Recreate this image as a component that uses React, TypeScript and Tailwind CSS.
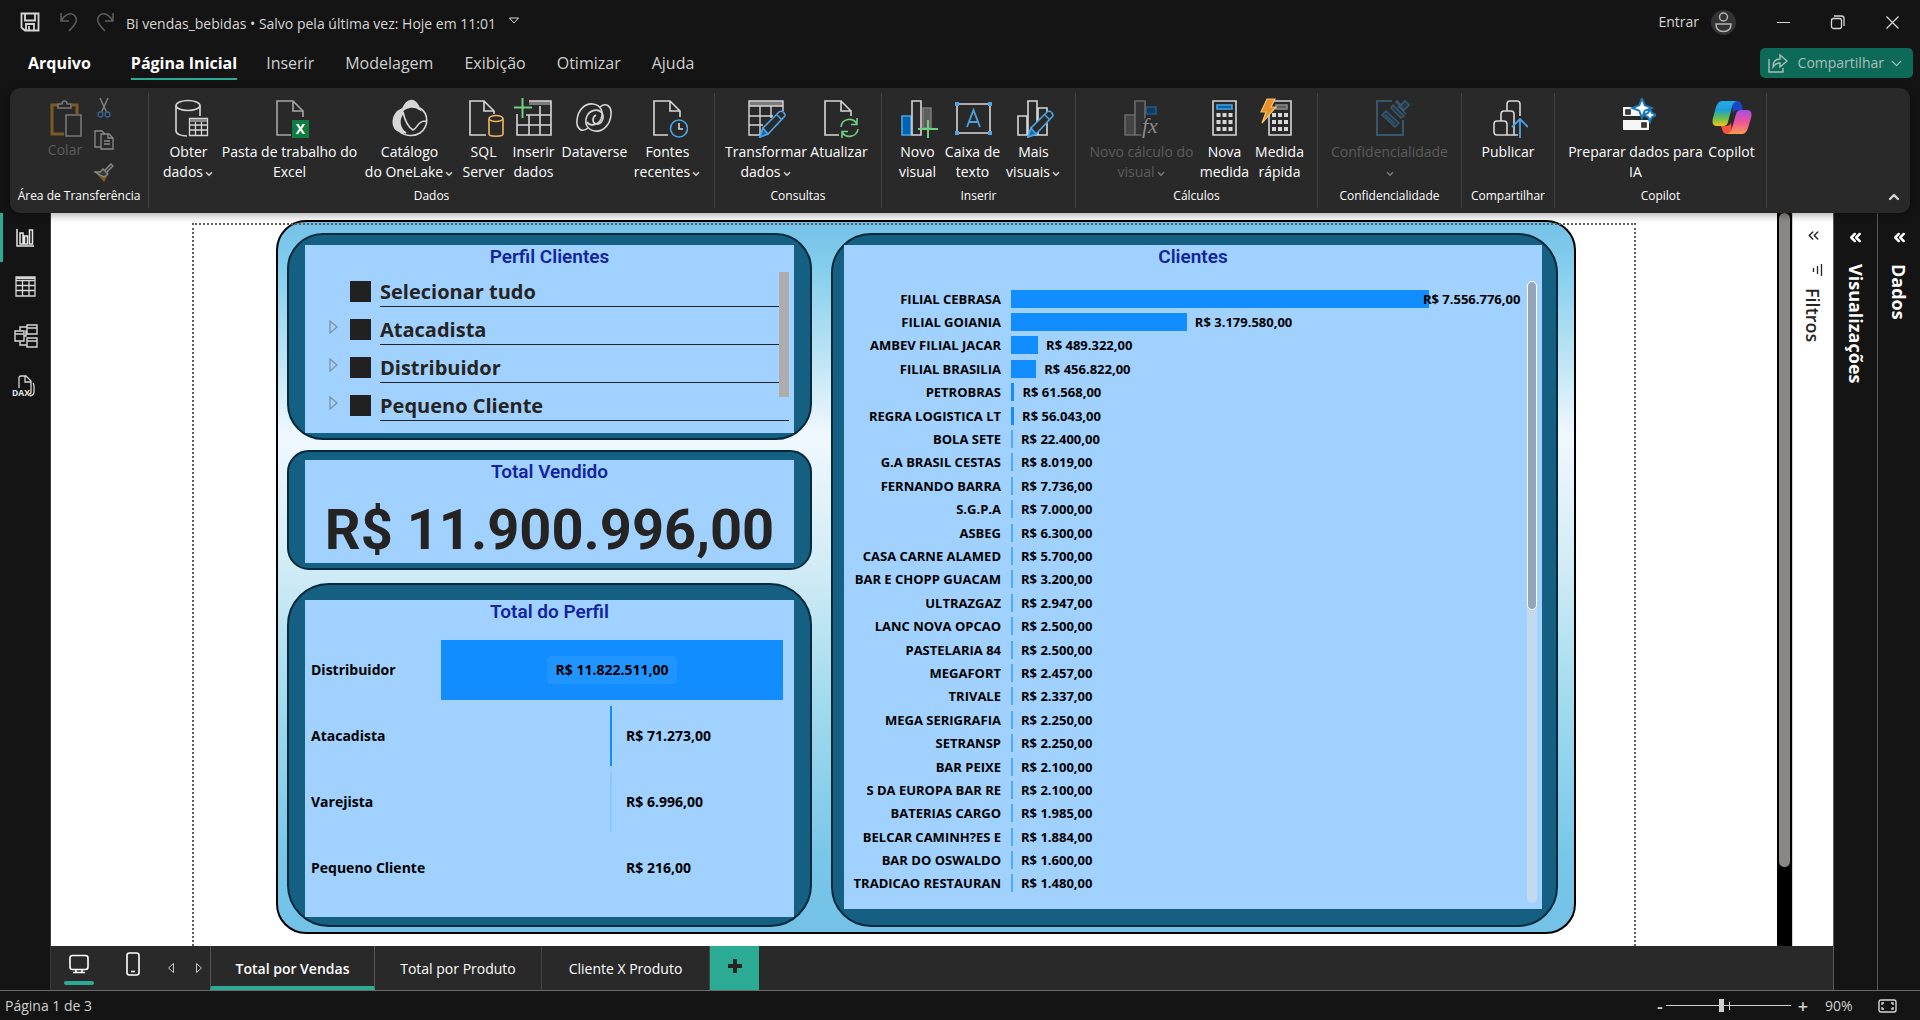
import React from "react";
import { ChevronDown, ChevronUp, ChevronsLeft } from "lucide-react";

const LIGHT = "#d6d6d6";
const BLUE = "#4ba3e3";

function Icon({ children }: { children: React.ReactNode }) {
  return (
    <svg className="block size-10 shrink-0" viewBox="0 0 40 40" fill="none" stroke={LIGHT} strokeWidth="1.6" aria-hidden="true">
      {children}
    </svg>
  );
}

const PageShape = ({ x = 7 }: { x?: number }) => (
  <g transform={`translate(${x} 0)`}>
    <path d="M14 37H0V3h16l10 10v6" />
    <path d="M16 3v10h10" />
  </g>
);

const Pencil = () => (
  <g stroke={BLUE}>
    <path d="M14 39l3-9L33 14q3-2 5 1t0 4L22 36z" fill="#292929" />
    <path d="M14 39l3-9 5 6z" fill="#0f6cbd" />
    <path d="M31 17l5 5" />
  </g>
);

const DatabaseTableIcon = () => (
  <Icon>
    <ellipse cx="19" cy="7.5" rx="12" ry="5" />
    <path d="M7 8v25c0 3 5 5 11 5M31 8v10" />
    <path d="M20.500 20.500h18v17h-18zM20.500 27h18M20.500 32h18M26.500 24v14M32.500 24v14" strokeWidth="1.300" />
    <path d="M21 21h17v3H21z" fill="#8a8a8a" stroke="none" />
  </Icon>
);

const ExcelIcon = () => (
  <Icon>
    <g stroke="#a6a6a6"><PageShape /></g>
    <path d="M22 22h17v18H22z" fill="#107c41" stroke="none" />
    <text x="30.500" y="36" textAnchor="middle" fill="#fff" stroke="none" fontSize="14" fontWeight="700" fontFamily="Open Sans, sans-serif">X</text>
  </Icon>
);

const OneLakeIcon = () => (
  <Icon>
    <path d="M12 11C1 16 0 31 11 34l5 1C9 30 8 22 13 15z" fill={LIGHT} />
    <path d="M12 13c2-7 6-11 10-10.500 4 .5 6 4 8 9-6-4-13-3-18 1.500z" fill={LIGHT} />
    <path d="M30 10c9 6 9 18 0 25-6 4-15 3-20-1M13 14c2 9 5 15 10 18 5-2 4-9 13-9" />
  </Icon>
);

const SqlIcon = () => (
  <Icon>
    <path d="M22 37H6V3h14l10 10v3M20 3v10h10" />
    <g stroke="#f2b661">
      <path d="M25 21v15c0 3 14 3 14 0V21" fill="#292929" />
      <ellipse cx="32" cy="20.500" rx="7" ry="3" fill="#292929" />
    </g>
  </Icon>
);

const InsertTableIcon = () => (
  <Icon>
    <path d="M15 3h22v4H15z" fill="#7a7a7a" stroke="none" />
    <path d="M3 16v21h34V3H15M12 17h25M3 27h34M15 17v20M26 8v29" />
    <path d="M8.500 0v20M0 9.500h18" stroke="#6fce7f" strokeWidth="2" />
  </Icon>
);

const DataverseIcon = () => (
  <Icon>
    <path d="M25 9C31 4 37 8 36 17c-1 10-8 17-16 16-8-1-11-8-8-15 3-6 11-8 15-3 3 5-1 12-6 11-4-1-4-7 0-9" />
    <path d="M13 30C7 35 1 31 2 22 3 12 10 5 18 6c8 1 11 8 8 15-3 6-11 8-14 3" />
  </Icon>
);

const RecentIcon = () => (
  <Icon>
    <path d="M20 37H6V3h16l10 10v6M22 3v10h10" />
    <circle cx="31" cy="30.500" r="8.500" stroke={BLUE} />
    <path d="M31 25v6h4" />
  </Icon>
);

const TransformIcon = () => (
  <Icon>
    <path d="M3 3h34v5H3z" fill="#7a7a7a" stroke="none" />
    <path d="M16 37H3V3h34v10M3 8h34M3 18h24M3 27h14M14 8v29M25 8v12" strokeWidth="1.400" />
    <Pencil />
  </Icon>
);

const RefreshIcon = () => (
  <Icon>
    <path d="M20 37H6V3h16l10 10v5M22 3v10h10" />
    <g stroke="#6fce7f">
      <path d="M22 29c1-9 12-10 16-3M38 20v6.500h-6M39 31c-1 8-12 10-16 3M23 40v-6.500h6" />
    </g>
  </Icon>
);

const NewVisualIcon = () => (
  <Icon>
    <path d="M4 18h9v19H4z" fill="#0063b1" stroke={BLUE} />
    <path d="M25 10h8v20h-8z" fill="#605e5c" stroke="#797775" />
    <path d="M14 3h9v34h-9z" fill="#292929" />
    <path d="M30 22v18M20 31h20" stroke="#6fce7f" strokeWidth="2" />
  </Icon>
);

const TextBoxIcon = () => (
  <Icon>
    <path d="M4 6h33v29H4z" />
    <path d="M2 4h4v4H2zM35 4h4v4h-4zM2 33h4v4H2zM35 33h4v4h-4z" fill={BLUE} stroke="none" />
    <path d="M14 29l6.500-17L27 29M16 24h9" stroke={BLUE} strokeWidth="1.800" />
  </Icon>
);

const MoreVisualsIcon = () => (
  <Icon>
    <path d="M4 18h9v19H4zM14 3h9v34h-9zM24 10h9v27h-9z" />
    <Pencil />
  </Icon>
);

const VisualCalcIcon = () => (
  <Icon>
    <g stroke="#6a6a6a">
      <path d="M3 17h10v20H3z" fill="#444" />
      <path d="M24 9h10v7H24z" fill="#0d3f66" stroke="#295a80" />
      <path d="M13 3h10v34H13z" fill="#333" />
    </g>
    <text x="20" y="35" fill="#8a8a8a" stroke="#292929" strokeWidth="3" paintOrder="stroke" fontSize="22" fontStyle="italic" fontFamily="Liberation Serif, serif">fx</text>
  </Icon>
);

const CalcKeys = ({ x }: { x: number }) => (
  <g fill={LIGHT} stroke="none" transform={`translate(${x} 0)`}>
    {[15, 22, 29].map((y) => <path key={y} d={`M0 ${y}h4v4h-4zM6 ${y}h4v4h-4zM12 ${y}h4v4h-4z`} />)}
  </g>
);

const MeasureIcon = () => (
  <Icon>
    <path d="M8 3h23v34H8z" />
    <path d="M12 7h15v4H12z" fill="#0063b1" stroke={BLUE} />
    <CalcKeys x={11.500} />
  </Icon>
);

const QuickMeasureIcon = () => (
  <Icon>
    <path d="M9 3h22v34H9z" />
    <path d="M16 7h11v4H16z" fill="#605e5c" stroke="#8a8a8a" />
    <CalcKeys x={12} />
    <path d="M7 1h8l-4 8h5L2 25l4-11H1z" fill="#e8912d" stroke="#f2c661" strokeWidth="1.200" />
  </Icon>
);

const SensitivityIcon = () => (
  <Icon>
    <g stroke="#36586c">
      <path d="M22 3H7v34h26V22" strokeWidth="2" />
      <path d="M12 17l4-4 13 12-4 4zM15 17l10 9M23 7l11 11-3 2L21 10zM26 4l8 8 5-5-4-4-4 4-4-4zM28 8l8 8" fill="#24394a" />
    </g>
  </Icon>
);

const PublishIcon = () => (
  <Icon>
    <path d="M6 26q0-3 3-3h7q3 0 3 3v11H9q-3 0-3-3zM13 23v-7q0-3 3-3h7q3 0 3 3v21H18M19 13V6q0-3 3-3h7q3 0 3 3v12M25 37h5" />
    <path d="M32 40V21M24 29l8-8 8 8" stroke={BLUE} strokeWidth="1.800" />
  </Icon>
);

const PrepareIcon = () => (
  <Icon>
    <path d="M7 9h27v9H7zM7 22h26v10H7z" fill="#f5f5f5" stroke="none" />
    <path d="M10 12h4v4h-4zM26 25h4v4h-4z" fill="#444" stroke="#292929" />
    <path d="M26 3l2 5 5 2-5 2-2 5-2-5-5-2 5-2zM34 13l1 2.500 3 1.500-3 1.500-1 2.500-1-2.500-3-1.500 3-1.500z" fill="none" stroke="#1a78b8" strokeWidth="4" />
    <path d="M26 3l2 5 5 2-5 2-2 5-2-5-5-2 5-2zM34 13l1 2.500 3 1.500-3 1.500-1 2.500-1-2.500-3-1.500 3-1.500z" fill="#fff" stroke="none" />
  </Icon>
);

const CopilotIcon = () => (
  <Icon>
    <defs>
      <linearGradient id="cpL" x1="0" y1="0" x2="0" y2="1">
        <stop offset="0" stopColor="#28a8ea" /><stop offset=".35" stopColor="#1aa0d8" />
        <stop offset=".7" stopColor="#6bbf4b" /><stop offset="1" stopColor="#f5c518" />
      </linearGradient>
      <linearGradient id="cpR" x1="0" y1="0" x2="0" y2="1">
        <stop offset="0" stopColor="#a94fe8" /><stop offset=".5" stopColor="#ee5397" />
        <stop offset="1" stopColor="#fb9a50" />
      </linearGradient>
    </defs>
    <g stroke="none">
      <path d="M20 3h5q4 0 5 5l1 4h-5q-4 0-5 4z" fill="#1a49c8" />
      <path d="M20 36h-5q-4 0-5-5l-1-3h5q4 0 5-4z" fill="#f2553c" />
      <path d="M10 3h15q-4 1-5 6l-4 15q-1 4-5 4H5q-6 0-4-8l3-11q2-6 6-6z" fill="url(#cpL)" />
      <path d="M30 36H15q4-1 5-6l4-14q1-4 5-4h6q6 0 4 8l-3 10q-2 6-6 6z" fill="url(#cpR)" />
    </g>
  </Icon>
);

type RibbonItem = { icon: React.ReactNode; lines: string[]; width: string; menu?: boolean; disabled?: boolean };

function RibbonButton({ icon, lines, width, menu, disabled }: RibbonItem) {
  return (
    <button type="button" disabled={disabled} className={`flex shrink-0 flex-col items-center gap-1 whitespace-nowrap text-sm leading-5 ${disabled ? "text-[#5c5c5c]" : "text-white"} ${width}`}>
      {icon}
      <span className="flex flex-col items-center">
        {lines.map((line, i) => (
          <span key={i} className="flex h-5 items-center">
            {line}
            {menu && i === lines.length - 1 && <ChevronDown className="mt-1 ml-px size-2.5" strokeWidth={4} color={disabled ? "#777" : "#ccc"} />}
          </span>
        ))}
      </span>
    </button>
  );
}

function RibbonGroup({ label, width, children }: { label: string; width: string; children: React.ReactNode }) {
  return (
    <section aria-label={label} className={`my-[5px] flex shrink-0 flex-col items-center border-r border-[#424242] pt-[5px] ${width}`}>
      <div className="flex h-[90px] items-start justify-center">{children}</div>
      <p className="text-xs leading-4 whitespace-nowrap text-white">{label}</p>
    </section>
  );
}

const groups: { label: string; width: string; items: RibbonItem[] }[] = [
  {
    label: "Dados", width: "w-[566px]",
    items: [
      { icon: <DatabaseTableIcon />, lines: ["Obter", "dados"], width: "w-16", menu: true },
      { icon: <ExcelIcon />, lines: ["Pasta de trabalho do", "Excel"], width: "w-[138px]" },
      { icon: <OneLakeIcon />, lines: ["Catálogo", "do OneLake"], width: "w-[102px]", menu: true },
      { icon: <SqlIcon />, lines: ["SQL", "Server"], width: "w-[46px]" },
      { icon: <InsertTableIcon />, lines: ["Inserir", "dados"], width: "w-[54px]" },
      { icon: <DataverseIcon />, lines: ["Dataverse"], width: "w-[68px]" },
      { icon: <RecentIcon />, lines: ["Fontes", "recentes"], width: "w-[78px]", menu: true },
    ],
  },
  {
    label: "Consultas", width: "w-[167px]",
    items: [
      { icon: <TransformIcon />, lines: ["Transformar", "dados"], width: "w-[82px]", menu: true },
      { icon: <RefreshIcon />, lines: ["Atualizar"], width: "w-16" },
    ],
  },
  {
    label: "Inserir", width: "w-[194px]",
    items: [
      { icon: <NewVisualIcon />, lines: ["Novo", "visual"], width: "w-11" },
      { icon: <TextBoxIcon />, lines: ["Caixa de", "texto"], width: "w-[66px]" },
      { icon: <MoreVisualsIcon />, lines: ["Mais", "visuais"], width: "w-14", menu: true },
    ],
  },
  {
    label: "Cálculos", width: "w-[242px]",
    items: [
      { icon: <VisualCalcIcon />, lines: ["Novo cálculo do", "visual"], width: "w-[116px]", menu: true, disabled: true },
      { icon: <MeasureIcon />, lines: ["Nova", "medida"], width: "w-[50px]" },
      { icon: <QuickMeasureIcon />, lines: ["Medida", "rápida"], width: "w-[60px]" },
    ],
  },
  {
    label: "Confidencialidade", width: "w-36",
    items: [{ icon: <SensitivityIcon />, lines: ["Confidencialidade", ""], width: "w-32", menu: true, disabled: true }],
  },
  { label: "Compartilhar", width: "w-[93px]", items: [{ icon: <PublishIcon />, lines: ["Publicar"], width: "w-16" }] },
  {
    label: "Copilot", width: "w-[212px]",
    items: [
      { icon: <PrepareIcon />, lines: ["Preparar dados para", "IA"], width: "w-[142px]" },
      { icon: <CopilotIcon />, lines: ["Copilot"], width: "w-[50px]" },
    ],
  },
];

function ClipboardGroup() {
  return (
    <RibbonGroup label="Área de Transferência" width="w-[139px]">
      <button type="button" disabled className="mr-1 flex w-[50px] flex-col items-center gap-0.5 text-sm leading-5 text-[#5c5c5c]">
        <Icon>
          <path d="M13 7H7v29h12M27 7h5v9" stroke="#7a5a26" strokeWidth="3" />
          <path d="M13 10V6h4c0-4 5-4 5 0h4v4zM21 17h15v21H21z" stroke="#777" strokeWidth="1.600" />
        </Icon>
        Colar
      </button>
      <div className="flex flex-col items-center gap-3 pr-1">
        <button type="button" disabled aria-label="Recortar">
          <svg className="size-5" viewBox="0 0 20 20" fill="none" stroke="#8a8a8a" strokeWidth="1.300">
            <path d="M6 0l6.500 14M14 0L7.500 14" />
            <circle cx="6.500" cy="16.500" r="2.500" stroke="#33658a" /><circle cx="13.500" cy="16.500" r="2.500" stroke="#33658a" />
          </svg>
        </button>
        <button type="button" disabled aria-label="Copiar">
          <svg className="size-5" viewBox="0 0 20 20" fill="none" stroke="#8a8a8a" strokeWidth="1.300">
            <path d="M7 17H1V1h7l3 3M7 4h8l4 4v11H7zM14 4v4h5M10 11h6M10 14h6" />
          </svg>
        </button>
        <button type="button" disabled aria-label="Pincel de formatação">
          <svg className="size-5" viewBox="0 0 20 20" fill="none" stroke="#8a8a8a" strokeWidth="1.300">
            <path d="M3 11l7 8 3-6-5-4z" fill="#7a5a26" stroke="#7a5a26" />
            <path d="M1 10l5 0 3-3 5 5-4 3zM11 8l6-6 2 2-6 6" fill="#3a3a3a" />
          </svg>
        </button>
      </div>
    </RibbonGroup>
  );
}

function Header() {
  const tabs = ["Inserir", "Modelagem", "Exibição", "Otimizar", "Ajuda"];
  return (
    <header className="shrink-0">
      <div className="flex h-11 items-center pl-5 text-[#d6d6d6]">
        <button type="button" aria-label="Salvar">
          <svg className="size-5" viewBox="0 0 20 20" fill="none" stroke="currentColor" strokeWidth="1.800">
            <path d="M1.500 1.500h17v17H5l-3.500-3zM5 1.500v7h10v-7M6 18v-6h8v6M9 14v4" />
          </svg>
        </button>
        <button type="button" aria-label="Desfazer" className="ml-5">
          <svg className="size-5" viewBox="0 0 20 20" fill="none" stroke="#5e5e5e" strokeWidth="1.500"><path d="M1 1v8h8M1 9C6 1 12 0 15 4s1 8-6 15" /></svg>
        </button>
        <button type="button" aria-label="Refazer" className="ml-4">
          <svg className="size-5" viewBox="0 0 20 20" fill="none" stroke="#5e5e5e" strokeWidth="1.500"><path d="M17 1v8H9M17 9C12 1 6 0 3 4s-1 8 6 15" /></svg>
        </button>
        <button type="button" className="ml-2.5 flex items-center gap-3 pt-1 text-sm whitespace-nowrap">
          Bi vendas_bebidas • Salvo pela última vez: Hoje em 11:01
          <svg className="mb-1.5 h-2 w-3" viewBox="0 0 12 8" fill="none" stroke="currentColor"><path d="M1.500 1h9L6 6z" /></svg>
        </button>
        <div className="ml-auto flex items-center">
          <button type="button" className="flex items-center gap-3 text-sm">
            Entrar
            <svg className="size-[25px]" viewBox="0 0 25 25" fill="none" stroke="#b4b4b4" strokeWidth="1.500">
              <circle cx="12.500" cy="12.500" r="12.500" fill="#333" stroke="none" />
              <circle cx="12.500" cy="7" r="4" /><path d="M5 14h15c0 5-3 7.500-7.500 7.500S5 19 5 14z" />
            </svg>
          </button>
          <button type="button" aria-label="Minimizar" className="ml-10">
            <svg className="size-4" viewBox="0 0 16 16" stroke="#d6d6d6"><path d="M1 8.500h13" /></svg>
          </button>
          <button type="button" aria-label="Restaurar" className="ml-[38px]">
            <svg className="size-4" viewBox="0 0 16 16" fill="none" stroke="#d6d6d6" strokeWidth="1.300"><rect x="1.500" y="4.500" width="10" height="10" rx="2" /><path d="M4 2h7.500Q14 2 14 4.500V12" /></svg>
          </button>
          <button type="button" aria-label="Fechar" className="mr-[19px] ml-[39px]">
            <svg className="size-4" viewBox="0 0 16 16" stroke="#d6d6d6" strokeWidth="1.300"><path d="M1.500 2.500l12 12M13.500 2.500l-12 12" /></svg>
          </button>
        </div>
      </div>
      <nav className="flex h-11 items-start pr-[7px] pl-7 text-base text-[#d0d0d0]">
        <button type="button" className="mt-1 leading-[30px] font-bold text-white">Arquivo</button>
        <button type="button" className="mt-1 ml-10 border-b-2 border-[#2bab94] leading-[30px] font-bold text-white">Página Inicial</button>
        <div className="ml-[29px] flex gap-[31px]">
          {tabs.map((t) => <button key={t} type="button" className="mt-1 leading-[30px]">{t}</button>)}
        </div>
        <button type="button" className="mt-1 ml-auto flex h-[30px] items-center rounded-[5px] bg-[#0d6a59] px-2 text-sm text-[#a9bfb9]">
          <svg className="mr-2.5 size-5" viewBox="0 0 20 20" fill="none" stroke="currentColor" strokeWidth="1.400">
            <path d="M1 6v13h14v-4M5 14c0-6 3-8 7-8V2l7 6-7 6v-4c-3 0-5 1-7 4z" />
          </svg>
          Compartilhar
          <ChevronDown className="ml-1 size-[17px]" strokeWidth={1.800} />
        </button>
      </nav>
    </header>
  );
}

function Ribbon() {
  return (
    <div className="relative z-10 mx-2.5 flex h-[125px] shrink-0 rounded-[10px] bg-[#292929] shadow-[0_2px_8px_rgba(0,0,0,0.35)]">
      <ClipboardGroup />
      {groups.map((g) => (
        <RibbonGroup key={g.label} label={g.label} width={g.width}>
          {g.items.map((it) => <RibbonButton key={it.lines[0]} {...it} />)}
        </RibbonGroup>
      ))}
      <button type="button" aria-label="Recolher faixa" className="mt-auto mr-2 mb-2 ml-auto text-[#d6d6d6]"><ChevronUp className="size-4" strokeWidth={3.500} /></button>
    </div>
  );
}

function SideNav() {
  return (
    <nav className="flex w-[51px] shrink-0 flex-col border-r border-[#3b3b3b]">
      <button type="button" aria-label="Exibição de relatório" className="flex h-[49px] items-center border-l-[3px] border-[#2bab94] pl-3">
        <svg className="size-5" viewBox="0 0 20 20" fill="none" stroke="#e6e6e6" strokeWidth="1.500"><path d="M2 1v17h17M5 16V5h3v11zM9.500 16V8h3v8zM14.500 16V2h3v14z" /></svg>
      </button>
      <button type="button" aria-label="Exibição de tabela" className="flex h-[49px] items-center pl-[15px]">
        <svg className="size-[21px]" viewBox="0 0 21 21" fill="none" stroke="#d6d6d6" strokeWidth="1.300"><path d="M1 1h19v19H1zM1 4.500h19M1 9.500h19M1 14.500h19M7.500 4v16M14 4v16" /><path d="M1 2h19" strokeWidth="2" /></svg>
      </button>
      <button type="button" aria-label="Exibição de modelo" className="flex h-[50px] items-center pl-[14px]">
        <svg className="size-6" viewBox="0 0 24 24" fill="none" stroke="#d6d6d6" strokeWidth="1.400"><path d="M13 1h10v9H13zM13 4h10M13 14h10v9H13zM13 17h10M1 7h9v10H1zM1 10h9M6 7V3h7M6 17v4h7M10 12h2V7h1" /></svg>
      </button>
      <button type="button" aria-label="Exibição de consulta DAX" className="flex h-[50px] items-center pl-3">
        <svg className="h-[22px] w-6" viewBox="0 0 24 22" fill="none" stroke="#d6d6d6" strokeWidth="1.300">
          <path d="M7 13V3q0-2 2-2h5l5 5v11q0 2-2 2M13 1v6h6M21 8q1 1 1 4v5q0 3-4 4" />
          <text x="0" y="21" fill="#e6e6e6" stroke="none" fontSize="8.500" fontWeight="700" fontFamily="Open Sans, sans-serif">DAX</text>
        </svg>
      </button>
    </nav>
  );
}

function Panel({ title, className, children }: { title: string; className: string; children: React.ReactNode }) {
  return (
    <section className={`flex flex-col border-2 border-[#05283a] bg-[#156082] ${className}`}>
      <div className="relative flex min-h-0 flex-1 flex-col bg-[#a0d1ff]">
        <h2 className="text-center font-[Roboto,sans-serif] text-[19px] leading-6 font-semibold text-[#12239e]">{title}</h2>
        {children}
      </div>
    </section>
  );
}

function Slicer() {
  const options = ["Selecionar tudo", "Atacadista", "Distribuidor", "Pequeno Cliente"];
  return (
    <div className="relative mr-[5px] ml-6">
      {options.map((o, i) => (
        <label key={o} className="flex h-[38px] items-end text-[20px] font-bold text-[#252423]">
          <span className="flex w-[21px] justify-start pb-2.5">
            {i > 0 && <svg className="h-4 w-2.5" viewBox="0 0 10 16" fill="none" stroke="#7d8da0" strokeWidth="1.200"><path d="M1 2v12l7-6z" /></svg>}
          </span>
          <input type="checkbox" className="mb-[5px] size-[21px] appearance-none bg-[#212121]" />
          <span className="ml-[9px] flex-1 border-b border-[#252423] leading-[28px]">{o}</span>
        </label>
      ))}
      <div className="absolute top-[3px] right-0 h-[125px] w-2.5 bg-[#adadad]" />
    </div>
  );
}

const profiles = [
  { name: "Distribuidor", value: "R$ 11.822.511,00" },
  { name: "Atacadista", value: "R$ 71.273,00" },
  { name: "Varejista", value: "R$ 6.996,00" },
  { name: "Pequeno Cliente", value: "R$ 216,00" },
];

function ProfileFunnel() {
  return (
    <div className="mt-[13px] mr-[11px] ml-1.5 flex flex-col text-sm font-bold text-black">
      {profiles.map((p, i) => (
        <div key={p.name} className="flex h-[66px] items-center">
          <span className="w-[130px] shrink-0 whitespace-nowrap">{p.name}</span>
          {i === 0 ? (
            <div className="flex h-[60px] flex-1 items-center justify-center bg-[#118dff]">
              <span className="rounded bg-[#2094ff] px-[9px] py-1">{p.value}</span>
            </div>
          ) : (
            <div className="grid h-[60px] flex-1 grid-cols-2 items-center">
              <div className="flex h-full justify-end">
                <div className={`w-0.5 ${i === 1 ? "bg-[#118dff]" : i === 2 ? "bg-[#91c7fc]" : "bg-transparent"}`} />
              </div>
              <span className="pl-3.5">{p.value}</span>
            </div>
          )}
        </div>
      ))}
    </div>
  );
}

const clients: [string, string, number][] = [
  ["FILIAL CEBRASA", "7.556.776,00", 7556776], ["FILIAL GOIANIA", "3.179.580,00", 3179580],
  ["AMBEV FILIAL JACAR", "489.322,00", 489322], ["FILIAL BRASILIA", "456.822,00", 456822],
  ["PETROBRAS", "61.568,00", 61568], ["REGRA LOGISTICA LT", "56.043,00", 56043],
  ["BOLA SETE", "22.400,00", 22400], ["G.A BRASIL CESTAS", "8.019,00", 8019],
  ["FERNANDO BARRA", "7.736,00", 7736], ["S.G.P.A", "7.000,00", 7000],
  ["ASBEG", "6.300,00", 6300], ["CASA CARNE ALAMED", "5.700,00", 5700],
  ["BAR E CHOPP GUACAM", "3.200,00", 3200], ["ULTRAZGAZ", "2.947,00", 2947],
  ["LANC NOVA OPCAO", "2.500,00", 2500], ["PASTELARIA 84", "2.500,00", 2500],
  ["MEGAFORT", "2.457,00", 2457], ["TRIVALE", "2.337,00", 2337],
  ["MEGA SERIGRAFIA", "2.250,00", 2250], ["SETRANSP", "2.250,00", 2250],
  ["BAR PEIXE", "2.100,00", 2100], ["S DA EUROPA BAR RE", "2.100,00", 2100],
  ["BATERIAS CARGO", "1.985,00", 1985], ["BELCAR CAMINH?ES E", "1.884,00", 1884],
  ["BAR DO OSWALDO", "1.600,00", 1600], ["TRADICAO RESTAURAN", "1.480,00", 1480],
];

function ClientsChart() {
  const max = clients[0][2];
  return (
    <div className="mt-3 mr-[5px] mb-1.5 flex min-h-0 flex-1">
      <div className="mt-1.5 mb-2 flex flex-1 flex-col text-[13px] font-bold text-black">
        {clients.map(([name, value, amount], i) => (
          <div key={name} className="flex min-h-0 flex-1 items-center">
            <span className="w-[157px] shrink-0 text-right leading-4 whitespace-nowrap">{name}</span>
            <div className="ml-2.5 flex flex-1 items-center">
              <div
                className={`h-[18px] shrink-0 ${amount > 30000 ? "bg-[#118dff]" : "bg-[#4ea9ff]"}`}
                style={{ width: `max(2px, ${(amount / max) * 81}%)` }}
              />
              <span className={`leading-4 whitespace-nowrap ${i === 0 ? "-ml-1.5" : "ml-2"}`}>R$ {value}</span>
            </div>
          </div>
        ))}
      </div>
      <div className="w-2.5 rounded-full bg-[#c3d9f0]">
        <div className="h-[329px] rounded-full border border-white bg-[#94a5b9]" />
      </div>
    </div>
  );
}

function ReportCanvas() {
  return (
    <div className="flex min-h-0 flex-1 bg-white">
      <div className="min-w-0 flex-1 overflow-hidden px-[141px]">
        <div className="relative h-full">
          <div className="pointer-events-none absolute inset-x-0 top-2.5 bottom-0 z-10 border-x-2 border-t-2 border-dotted border-[#605e5c]" />
          <div className="flex h-full pt-[7px] pr-[60px] pb-3 pl-[84px]">
            <div className="flex flex-1 gap-[19px] rounded-[30px] border-2 border-black bg-[linear-gradient(180deg,#74c1e8_0%,#83cdec_6%,#b8e2f3_18%,#f0f8ff_30%,#d3ecf6_48%,#a5dcee_66%,#78c6e8_90%,#74c1e8_100%)] pt-[11px] pr-4 pb-[5px] pl-[9px]">
              <div className="flex w-[525px] shrink-0 flex-col">
                <Panel title="Perfil Clientes" className="h-[207px] shrink-0 rounded-[36px] pt-2.5 pr-4 pb-[5px] pl-4"><Slicer /></Panel>
                <Panel title="Total Vendido" className="mt-[10px] h-[120px] shrink-0 rounded-[22px] pt-2 pr-4 pb-[5px] pl-4">
                  <p className="text-center font-[Roboto,sans-serif] text-[56px] leading-[92px] font-bold whitespace-nowrap text-[#252423]">R$ 11.900.996,00</p>
                </Panel>
                <Panel title="Total do Perfil" className="mt-[13px] min-h-0 flex-1 rounded-[42px] pt-[15px] pr-4 pb-2 pl-4"><ProfileFunnel /></Panel>
              </div>
              <Panel title="Clientes" className="flex-1 rounded-[40px] pt-2.5 pr-3.5 pb-4 pl-[11px]"><ClientsChart /></Panel>
            </div>
          </div>
        </div>
      </div>
      <div className="w-[15px] shrink-0 bg-black px-0.5"><div className="h-[654px] rounded-full bg-[#8a8886]" /></div>
      <aside className="flex w-[41px] shrink-0 flex-col items-center border-l border-[#d0d0d0] pt-3.5 text-[#252423]">
        <button type="button" aria-label="Expandir filtros"><ChevronsLeft className="size-[17px]" strokeWidth={2} /></button>
        <svg className="mt-5 ml-2 h-3 w-3" viewBox="0 0 12 12" stroke="#252423" strokeWidth="1.300"><path d="M10.500 0v12M6.500 2v8M2.500 4v4" /></svg>
        <h2 className="mt-3 text-lg font-semibold [writing-mode:vertical-rl]">Filtros</h2>
      </aside>
    </div>
  );
}

function PageTabs() {
  return (
    <div className="flex h-11 shrink-0 bg-[#292929] text-sm text-white">
      <div className="flex w-[159px] shrink-0 items-start">
        <button type="button" aria-label="Layout da área de trabalho" className="mt-2 ml-[13px] flex w-[30px] flex-col items-center">
          <svg className="h-5 w-5" viewBox="0 0 20 20" fill="none" stroke="#fff" strokeWidth="1.600"><rect x="1" y="1.500" width="18" height="14" rx="2.500" /><path d="M7 15.500v3M13 15.500v3M4 18.500h12" /></svg>
          <span className="mt-[7px] h-1 w-full rounded-full bg-[#2bab94]" />
        </button>
        <button type="button" aria-label="Layout móvel" className="mt-1.5 ml-8">
          <svg className="h-6 w-3.5" viewBox="0 0 14 24" fill="none" stroke="#fff" strokeWidth="1.600"><rect x="1" y="1" width="12" height="22" rx="2.500" /><path d="M5 19.500h4" /></svg>
        </button>
        <button type="button" aria-label="Página anterior" className="mt-4 ml-[27px]">
          <svg className="h-3 w-2" viewBox="0 0 8 12" fill="none" stroke="#c8c8c8"><path d="M6.500 1.500v9L1.500 6z" /></svg>
        </button>
        <button type="button" aria-label="Próxima página" className="mt-4 ml-5">
          <svg className="h-3 w-2" viewBox="0 0 8 12" fill="none" stroke="#c8c8c8"><path d="M1.500 1.500v9l5-4.500z" /></svg>
        </button>
      </div>
      <button type="button" className="w-[165px] border-x border-b-4 border-x-[#555] border-b-[#2bab94] pt-1.5 font-semibold">Total por Vendas</button>
      <button type="button" className="w-[167px] border-r border-[#444] pt-0.5">Total por Produto</button>
      <button type="button" className="w-[168px] border-r border-[#444] pt-0.5">Cliente X Produto</button>
      <button type="button" aria-label="Nova página" className="flex w-[49px] items-center justify-center bg-[#2bab94]">
        <svg className="mb-1 size-3.5" viewBox="0 0 14 14" stroke="#252423" strokeWidth="4"><path d="M7 0v14M0 7h14" /></svg>
      </button>
    </div>
  );
}

function CollapsedPane({ title, width }: { title: string; width: string }) {
  return (
    <aside className={`flex shrink-0 flex-col items-center border-l border-[#5a5a5a] pt-4 text-white ${width}`}>
      <button type="button" aria-label={`Expandir ${title}`}><ChevronsLeft className="size-[17px]" strokeWidth={3.500} /></button>
      <h2 className="mt-[18px] text-lg font-bold [writing-mode:vertical-rl]">{title}</h2>
    </aside>
  );
}

function StatusBar() {
  return (
    <footer className="flex h-[30px] shrink-0 items-center border-t border-[#6a6a6a] pr-[23px] pl-[5px] text-sm text-[#d0d0d0]">
      <span>Página 1 de 3</span>
      <div className="ml-auto flex items-center">
        <button type="button" aria-label="Diminuir zoom" className="w-3 text-lg leading-5 font-semibold">-</button>
        <div className="relative flex items-center">
          <input
            type="range" min="10" max="190" defaultValue="90" aria-label="Zoom"
            className="h-4 w-[125px] appearance-none bg-transparent [&::-webkit-slider-runnable-track]:h-px [&::-webkit-slider-runnable-track]:bg-[#d0d0d0] [&::-webkit-slider-thumb]:-mt-1.5 [&::-webkit-slider-thumb]:h-[13px] [&::-webkit-slider-thumb]:w-[5px] [&::-webkit-slider-thumb]:appearance-none [&::-webkit-slider-thumb]:bg-[#d0d0d0]"
          />
          <span className="pointer-events-none absolute left-1/2 h-2 w-px bg-[#d0d0d0]" />
        </div>
        <button type="button" aria-label="Aumentar zoom" className="ml-1.5 w-3 text-lg leading-5 font-semibold">+</button>
        <span className="ml-4 w-[53px]">90%</span>
        <button type="button" aria-label="Ajustar à página">
          <svg className="h-3.5 w-[19px]" viewBox="0 0 19 14" fill="none" stroke="#d6d6d6" strokeWidth="1.400"><rect x="1" y="1" width="17" height="12" rx="2" /><path d="M4 6V4h2M13 4h2v2M15 8v2h-2M6 10H4V8" /></svg>
        </button>
      </div>
    </footer>
  );
}

export default function App() {
  return (
    <div className="flex h-screen flex-col overflow-hidden bg-[#141414] font-['Open_Sans','Noto_Sans',sans-serif]">
      <Header />
      <Ribbon />
      <main className="flex min-h-0 flex-1">
        <SideNav />
        <div className="flex min-w-0 flex-1 flex-col">
          <ReportCanvas />
          <PageTabs />
        </div>
        <CollapsedPane title="Visualizações" width="w-11" />
        <CollapsedPane title="Dados" width="w-[43px]" />
      </main>
      <StatusBar />
    </div>
  );
}
